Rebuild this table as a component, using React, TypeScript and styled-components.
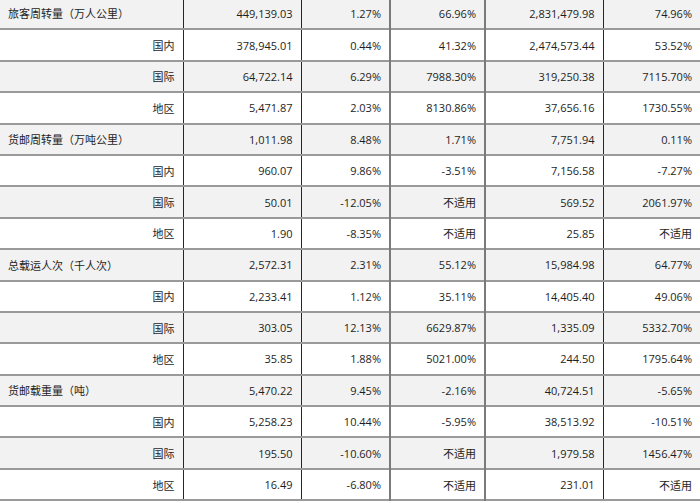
import React from "react"
import styled, { createGlobalStyle } from "styled-components"

const GlobalStyle = createGlobalStyle`
  html, body {
    margin: 0;
    padding: 0;
    background: #fff;
    overflow: hidden;
  }
  body {
    font-family: "Open Sans", "Noto Sans CJK SC", sans-serif;
  }
`

type Edge = "dark" | "light" | "none"

const Table = styled.table`
  border-collapse: collapse;
  table-layout: fixed;
  width: 700px;
  margin-top: -2px;
  color: #1e1e1e;
  font-size: 11px;
`

const Row = styled.tr<{ $shade: boolean }>`
  height: 31.4px;
  background: ${({ $shade }) => ($shade ? "#f2f2f2" : "#fff")};
  border-bottom: 2px solid #9a9a9a;
`

const Cell = styled.td<{ $edge: Edge; $left?: boolean }>`
  padding: 0 8px;
  white-space: nowrap;
  text-align: ${({ $left }) => ($left ? "left" : "right")};
  vertical-align: middle;
  border-left: ${({ $edge }) =>
    $edge === "dark"
      ? "1px solid #262626"
      : $edge === "light"
      ? "2px solid #7a7a7a"
      : "none"};
`

const widths = [183, 118, 89, 95, 118, 97]
const edges: Edge[] = ["none", "dark", "dark", "light", "light", "dark"]

type Line = { label: string; head?: boolean; values: string[] }

const groups: [string, string[][]][] = [
  [
    "旅客周转量（万人公里）",
    [
      ["449,139.03", "1.27%", "66.96%", "2,831,479.98", "74.96%"],
      ["378,945.01", "0.44%", "41.32%", "2,474,573.44", "53.52%"],
      ["64,722.14", "6.29%", "7988.30%", "319,250.38", "7115.70%"],
      ["5,471.87", "2.03%", "8130.86%", "37,656.16", "1730.55%"],
    ],
  ],
  [
    "货邮周转量（万吨公里）",
    [
      ["1,011.98", "8.48%", "1.71%", "7,751.94", "0.11%"],
      ["960.07", "9.86%", "-3.51%", "7,156.58", "-7.27%"],
      ["50.01", "-12.05%", "不适用", "569.52", "2061.97%"],
      ["1.90", "-8.35%", "不适用", "25.85", "不适用"],
    ],
  ],
  [
    "总载运人次（千人次）",
    [
      ["2,572.31", "2.31%", "55.12%", "15,984.98", "64.77%"],
      ["2,233.41", "1.12%", "35.11%", "14,405.40", "49.06%"],
      ["303.05", "12.13%", "6629.87%", "1,335.09", "5332.70%"],
      ["35.85", "1.88%", "5021.00%", "244.50", "1795.64%"],
    ],
  ],
  [
    "货邮载重量（吨）",
    [
      ["5,470.22", "9.45%", "-2.16%", "40,724.51", "-5.65%"],
      ["5,258.23", "10.44%", "-5.95%", "38,513.92", "-10.51%"],
      ["195.50", "-10.60%", "不适用", "1,979.58", "1456.47%"],
      ["16.49", "-6.80%", "不适用", "231.01", "不适用"],
    ],
  ],
]

const subs = ["国内", "国际", "地区"]

const lines: Line[] = groups.flatMap(([title, rows]) =>
  rows.map((values, i) => ({
    label: i === 0 ? title : subs[i - 1],
    head: i === 0,
    values,
  }))
)

const App: React.FC = () => (
  <>
    <GlobalStyle />
    <Table>
      <colgroup>
        {widths.map((w, i) => (
          <col key={i} style={{ width: w }} />
        ))}
      </colgroup>
      <tbody>
        {lines.map((line, r) => (
          <Row key={r} $shade={r % 2 === 0}>
            <Cell $edge="none" $left={line.head}>
              {line.label}
            </Cell>
            {line.values.map((v, c) => (
              <Cell key={c} $edge={edges[c + 1]}>
                {v}
              </Cell>
            ))}
          </Row>
        ))}
      </tbody>
    </Table>
  </>
)

export default App
